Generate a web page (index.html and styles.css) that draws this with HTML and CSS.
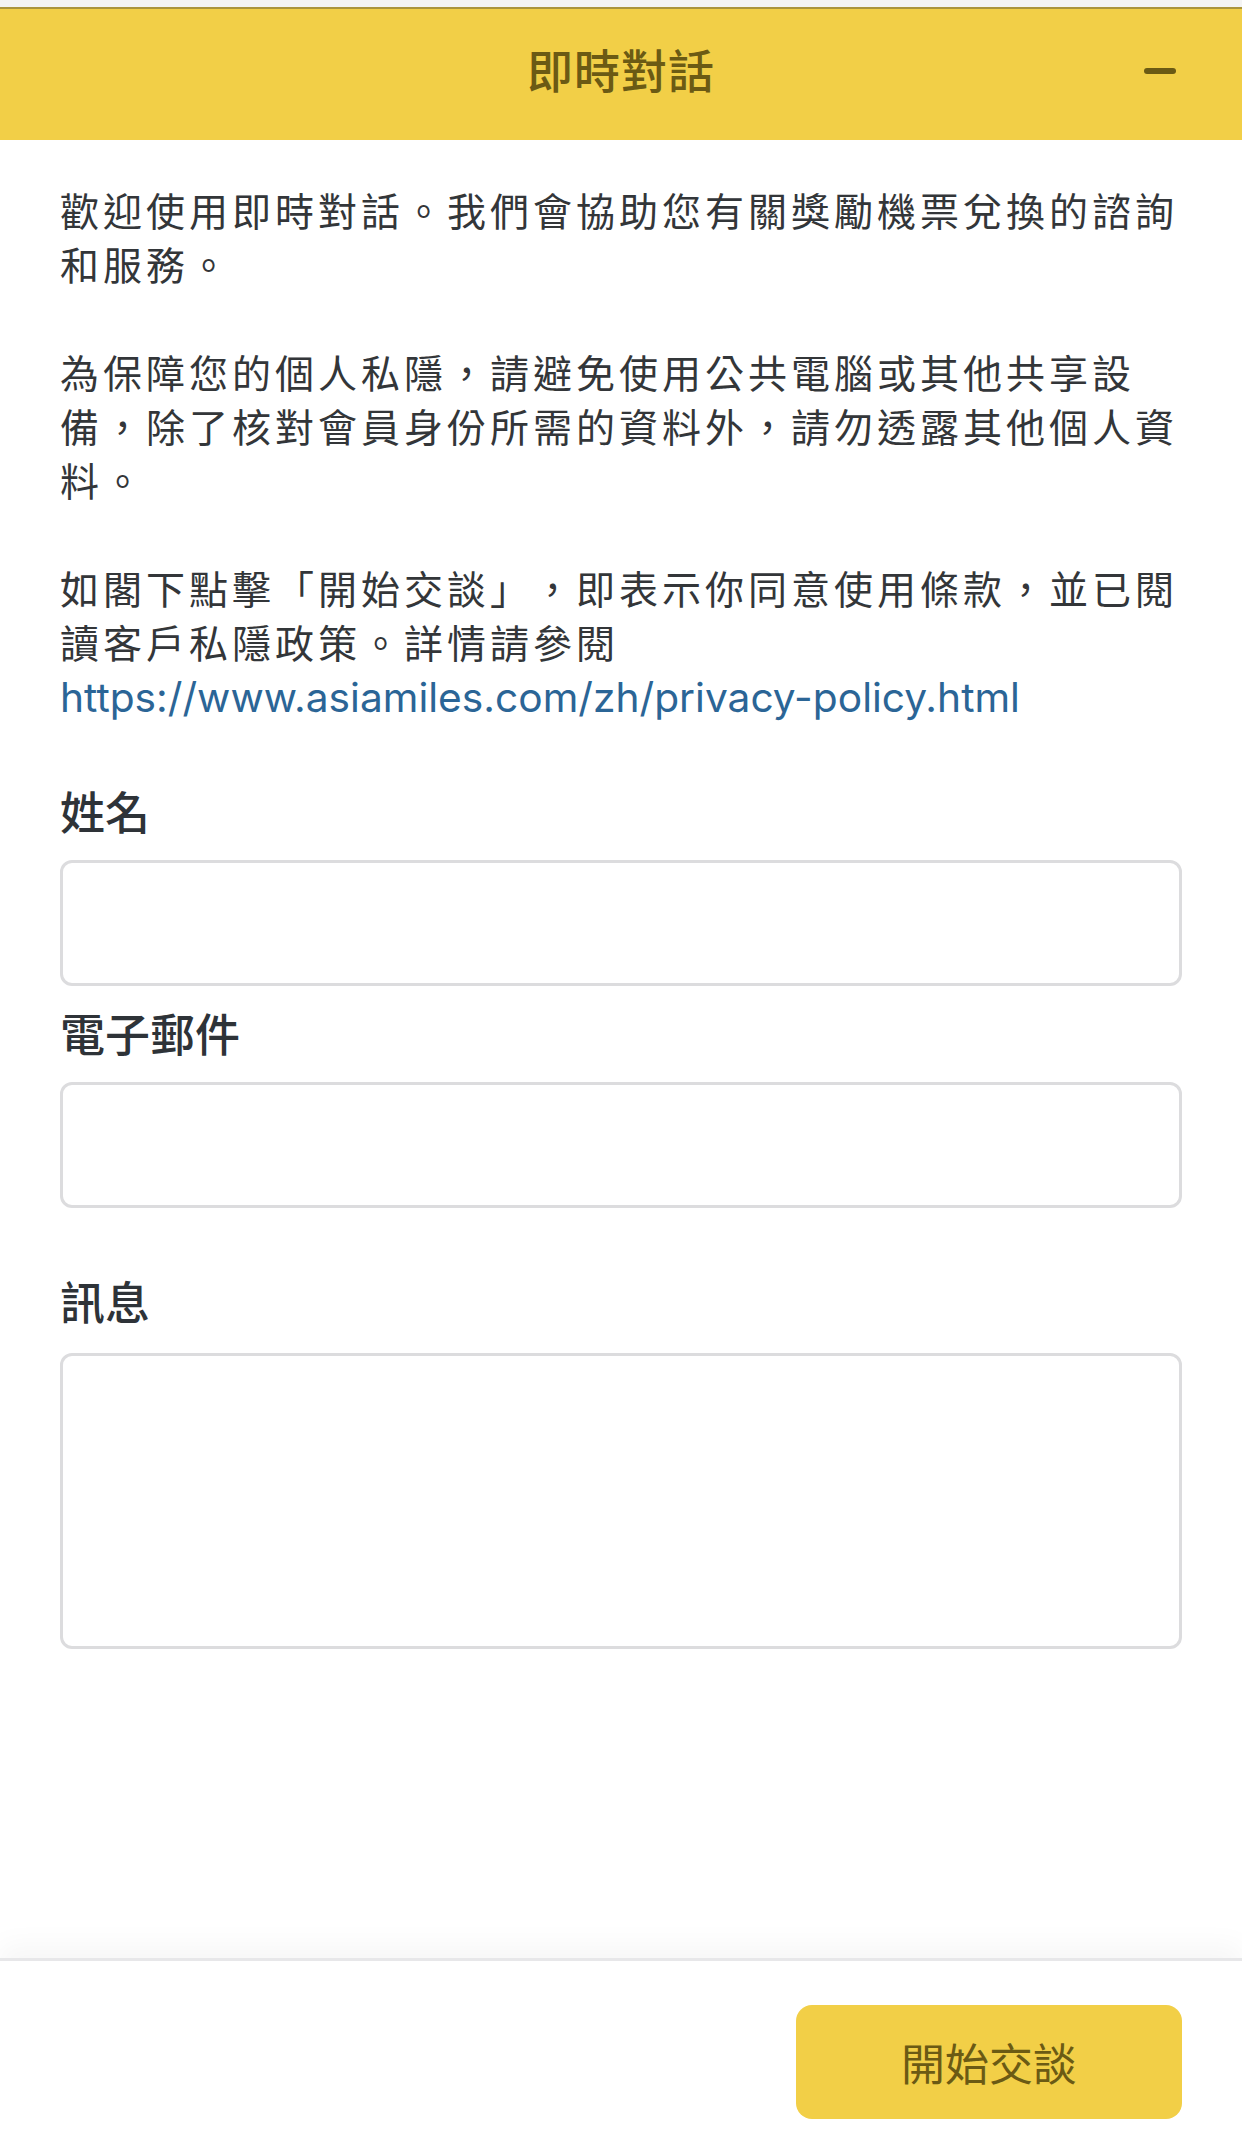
FILE: index.html
```html
<!DOCTYPE html>
<html lang="zh-Hant">
<head>
    <meta charset="UTF-8">
    <meta name="viewport" content="width=device-width, initial-scale=1.0">
    <title>即時對話</title>
    <link rel="stylesheet" href="styles.css">
</head>
<body>
    <div class="page">
        <div class="top-strip"></div>
        <header class="chat-header">
            <h1>即時對話</h1>
            <button class="minimize" aria-label="minimize">
                <svg width="32" height="8" viewBox="0 0 32 8"><line x1="3" y1="4" x2="29" y2="4" stroke="#6b5a14" stroke-width="6" stroke-linecap="round"/></svg>
            </button>
        </header>

        <main class="chat-body">
            <div class="intro">
                <p>歡迎使用即時對話。我們會協助您有關獎勵機票兌換的諮詢和服務。</p>
                <p>為保障您的個人私隱，請避免使用公共電腦或其他共享設備，除了核對會員身份所需的資料外，請勿透露其他個人資料。</p>
                <p>如閣下點擊「開始交談」，即表示你同意使用條款，並已閱讀客戶私隱政策。詳情請參閱 <a href="#" class="link">https://www.asiamiles.com/zh/privacy-policy.html</a></p>
            </div>

            <form class="chat-form" id="chat-form">
                <div class="field">
                    <label for="name">姓名</label>
                    <input type="text" id="name">
                </div>
                <div class="field">
                    <label for="email">電子郵件</label>
                    <input type="email" id="email">
                </div>
                <div class="field field-message">
                    <label for="message">訊息</label>
                    <textarea id="message"></textarea>
                </div>
            </form>
        </main>

        <footer class="chat-footer">
            <button type="submit" form="chat-form" class="start-btn">開始交談</button>
        </footer>
    </div>
</body>
</html>
```

FILE: styles.css
```css
body {
    margin: 0;
    padding: 0;
    background-color: #ffffff;
    font-family: "Noto Sans CJK TC", "Noto Sans", sans-serif;
    color: #333639;
}
.page {
    height: 100vh;
    display: flex;
    flex-direction: column;
}
.top-strip {
    height: 7px;
    background-color: #f4f4f4;
}
.chat-header {
    height: 131px;
    background-color: #f2cf47;
    border-top: 2px solid #ab953d;
    display: flex;
    align-items: center;
    justify-content: center;
    position: relative;
}
.chat-header h1 {
    margin: 0 0 14px;
    font-size: 46px;
    font-weight: 500;
    letter-spacing: 1px;
    color: #6b5a14;
}
.minimize {
    position: absolute;
    right: 66px;
    top: 58px;
    border: none;
    background: none;
    padding: 0;
    width: 32px;
    height: 8px;
    display: flex;
}
.chat-body {
    flex: 1;
    padding: 42px 60px 0;
}
.intro p {
    margin: 0 0 54px;
    font-size: 39px;
    letter-spacing: 4px;
    line-height: 54px;
    text-spacing-trim: space-all;
}
.intro p:last-child {
    margin-bottom: 0;
}
.link {
    color: #2b6596;
    text-decoration: none;
    font-family: "Inter", "Liberation Sans", sans-serif;
    font-size: 40.7px;
    letter-spacing: 0;
}
.chat-form {
    margin-top: 60px;
}
.field label {
    display: block;
    font-size: 45px;
    font-weight: 500;
    line-height: 52px;
    color: #2e3338;
}
.field input,
.field textarea {
    display: block;
    box-sizing: border-box;
    width: 100%;
    height: 126px;
    margin: 23px 0 21px;
    border: 3px solid #dcdcde;
    border-radius: 12px;
    font-size: 40px;
    padding: 10px 20px;
    background: #fff;
}
.field-message {
    padding-top: 46px;
}
.field textarea {
    height: 296px;
    margin-top: 26px;
    resize: none;
}
.chat-footer {
    border-top: 3px solid #e7e7e9;
    box-shadow: 0 -14px 26px rgba(0, 0, 0, 0.035);
    padding: 44px 60px 23px;
    display: flex;
    justify-content: flex-end;
}
.start-btn {
    width: 386px;
    height: 114px;
    border: none;
    border-radius: 16px;
    background-color: #f2cf47;
    color: #6b5a14;
    font-family: "Noto Sans CJK TC", sans-serif;
    font-size: 44px;
}
```
